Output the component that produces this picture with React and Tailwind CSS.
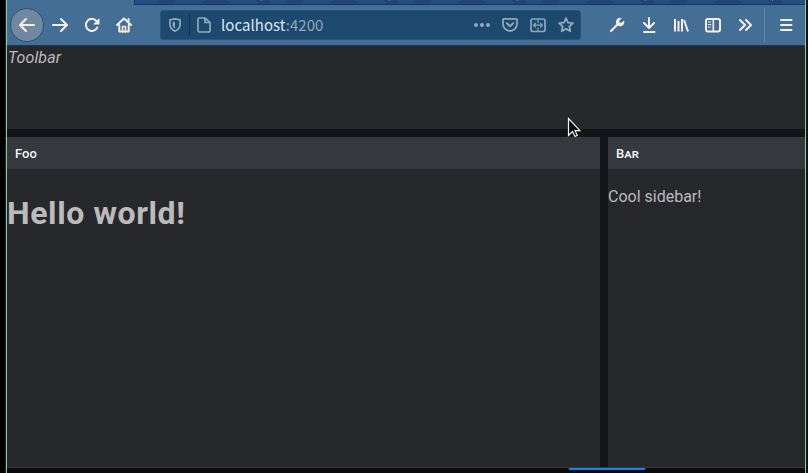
function Icon({ children, className = "", size = 16, w = 2 }) {
  return (
    <svg width={size} height={size} viewBox={`0 0 ${size} ${size}`} fill="none" stroke="currentColor" strokeWidth={w} strokeLinecap="round" strokeLinejoin="round" className={`block shrink-0 ${className}`}>
      {children}
    </svg>
  );
}

function AddressBar() {
  return (
    <div className="ml-[27px] flex h-[30px] w-[421px] shrink-0 items-center rounded-[3px] border border-[#2b5479] bg-[#1d496e] text-[#8fa9ba]">
      <Icon className="ml-[6px]">
        <path d="M8 1.9c-1.7.5-3.4.8-5.1.9v4.4c0 3 1.6 5.3 5.1 7 3.5-1.7 5.1-4 5.1-7V2.8c-1.7-.1-3.4-.4-5.1-.9z" strokeWidth="1.7" />
        <path d="M8 4.7c-.8.2-1.6.4-2.4.5v2.5c0 1.7.8 2.9 2.4 3.9z" fill="currentColor" stroke="none" />
      </Icon>
      <div className="ml-[6px] h-[22px] w-px bg-[#132f4b]" />
      <Icon className="ml-[6px]">
        <path d="M3.5 1h5.8l4.7 4.700v7.800a1.500 1.500 0 0 1-1.500 1.500h-9A1.500 1.500 0 0 1 2 13.500v-11A1.500 1.500 0 0 1 3.500 1zM9 1v4.500h4.700" strokeWidth="1.700" />
      </Icon>
      <div className="ml-[9px] flex-1 whitespace-nowrap font-['Noto_Sans_CJK_SC',sans-serif] text-[15px] leading-[28px] tracking-[0.04px]">
        <span className="text-[#dce7ed]">localhost</span>:4200
      </div>
      <div className="mr-[6px] flex items-center gap-3">
        <Icon>
          <g fill="currentColor" stroke="none">
            <circle cx="2" cy="8" r="2" />
            <circle cx="8" cy="8" r="2" />
            <circle cx="14" cy="8" r="2" />
          </g>
        </Icon>
        <Icon>
          <path d="M2 1.8h12a1 1 0 0 1 1 1V7A7 7 0 0 1 1 7V2.800a1 1 0 0 1 1-1z" strokeWidth="1.800" />
          <path d="M4.800 6.200 8 9.200l3.200-3" />
        </Icon>
        <Icon>
          <rect x="1" y="2" width="14" height="12.500" rx="2" strokeWidth="1.700" />
          <path d="M8 2v3.500M8 11v3.500M3.500 8.200h9M5.500 6.200l-2 2 2 2M10.500 6.200l2 2-2 2" strokeWidth="1.200" />
        </Icon>
        <Icon>
          <path d="m8 1.200 2 4.500 4.900.5-3.600 3.300 1 4.800L8 11.900l-4.300 2.400 1-4.800L1.100 6.200 6 5.700z" strokeWidth="1.800" />
        </Icon>
      </div>
    </div>
  );
}

function BrowserToolbar() {
  return (
    <div className="flex h-[41px] shrink-0 items-center border-b border-[#1b385b] bg-[#436e96] text-[#f6efdf]">
      <div className="ml-[3px] flex size-[34px] shrink-0 items-center justify-center rounded-full border border-[#2c5178] bg-[#7189a0]">
        <Icon>
          <path d="M15 8H1.500M7 2 1 8l6 6" />
        </Icon>
      </div>
      <Icon className="ml-2">
        <path d="M1 8h13.500M9 2l6 6-6 6" />
      </Icon>
      <Icon className="ml-4">
        <path d="M13.300 10.500A6 6 0 1 1 12.500 4l1.500 1.700" />
        <path d="M15.500 1v6.500H9z" fill="currentColor" stroke="none" />
      </Icon>
      <Icon className="ml-4">
        <path d="m1 8 7-6.500L15 8" />
        <path d="M3.300 8v6.500h9.400V8M12.500 2v3" />
        <path d="M6.500 15V9.500h3V15" strokeWidth="1.600" />
      </Icon>
      <div className="ml-px">
        <AddressBar />
      </div>
      <Icon className="ml-[28px]">
        <path d="M2 14 9 7" strokeWidth="2.200" />
        <path d="M12.800 1.200a4.200 4.200 0 1 0 2.200 2.300l-2.500 2.300-2-.3-.2-2z" fill="currentColor" stroke="none" />
      </Icon>
      <Icon className="ml-4">
        <path d="M8 1v9M3 6l5 5 5-5M3 15h10.500" />
      </Icon>
      <Icon className="ml-4">
        <path d="M2 2v12.500M5.500 4v10.500M9 2v12.500M11 3l4 11.500" strokeLinecap="butt" />
      </Icon>
      <Icon className="ml-4">
        <rect x="1" y="2" width="14" height="12.500" rx="2" />
        <path d="M8.300 2v12.500" strokeWidth="1.600" />
        <path d="M3.300 5h2.500M3.300 7.500h2.500M3.300 10h2" strokeWidth="1" />
      </Icon>
      <Icon className="ml-4">
        <path d="m3 3 5 5-5 5M9 3l5 5-5 5" />
      </Icon>
      <div className="ml-[11px] h-[34px] w-px shrink-0 bg-[#6888a9]" />
      <Icon className="ml-[13px]">
        <path d="M3 3h10.500M3 8h10.500M3 13h10.500" />
      </Icon>
    </div>
  );
}

function TabStrip() {
  return (
    <div className="flex h-[5px] shrink-0 bg-[#436e96]">
      <div className="ml-[127px] flex-1 border-b border-l border-[#1a3760] bg-[#244f82]">
        <svg className="block" width="670" height="4">
          <g fill="#204674">
            {[26, 154, 282, 410, 538].map((x) => (
              <path key={x} d={`M${x} 0h16l-5 4h-16zM${x + 45} 0h20l6 4h-32zM${x + 95} 0h12l4 4h-14z`} />
            ))}
          </g>
          <g fill="#4b80ac">
            {[126, 254, 382, 510, 637].map((x) => (
              <rect key={x} x={x} y="0" width="1" height="1" />
            ))}
          </g>
        </svg>
      </div>
    </div>
  );
}

function PanelHeader({ children, className = "" }) {
  return (
    <div className={`h-8 shrink-0 bg-[#35383c] pl-2 pt-px text-[13px] font-medium leading-8 text-[#f3f3f3] ${className}`}>
      {children}
    </div>
  );
}

export default function App() {
  return (
    <div className="relative flex h-[473px] w-[808px] overflow-hidden bg-[#08090b] font-[Roboto,sans-serif] text-[16px] text-[#bbbbbb]">
      <div className="w-[5px] shrink-0 bg-black" />
      <div className="w-px shrink-0 bg-[#222423]" />
      <div className="w-px shrink-0 bg-[#84cf91]" />
      <div className="flex w-[798px] shrink-0 flex-col bg-[#27282c]">
        <TabStrip />
        <BrowserToolbar />
        <div className="h-[83px] shrink-0 pl-px leading-6 italic tracking-[0.1px]">Toolbar</div>
        <div className="flex h-[338px] shrink-0 gap-2 bg-[#121517] pt-2">
          <div className="flex w-[593px] flex-col bg-[#27282c]">
            <PanelHeader>Foo</PanelHeader>
            <h1 className="mt-[25px] text-[32px] font-bold leading-[38px] tracking-[0.6px]">Hello world!</h1>
          </div>
          <div className="flex flex-1 flex-col bg-[#27282c]">
            <PanelHeader className="[font-variant-caps:small-caps]">Bar</PanelHeader>
            <p className="mt-[18px] leading-5">Cool sidebar!</p>
          </div>
        </div>
        <div className="h-px shrink-0 bg-[#39393b]" />
        <div className="h-[5px] shrink-0 bg-[#0b0b0c]">
          <div className="ml-[562px] h-[2px] w-[76px] bg-[#0a84ff]" />
        </div>
      </div>
      <div className="w-px shrink-0 bg-[#84cf91]" />
      <div className="w-[2px] shrink-0 bg-[#10151b]" />
      <svg className="absolute left-[567px] top-[117px]" width="14" height="21" viewBox="0 0 14 21">
        <path d="M1.500 1.500v17l4-4 2.500 5 2.300-1.200-2.300-4.600h5z" fill="#080808" stroke="#f5f5f5" strokeWidth="1.200" />
      </svg>
    </div>
  );
}
